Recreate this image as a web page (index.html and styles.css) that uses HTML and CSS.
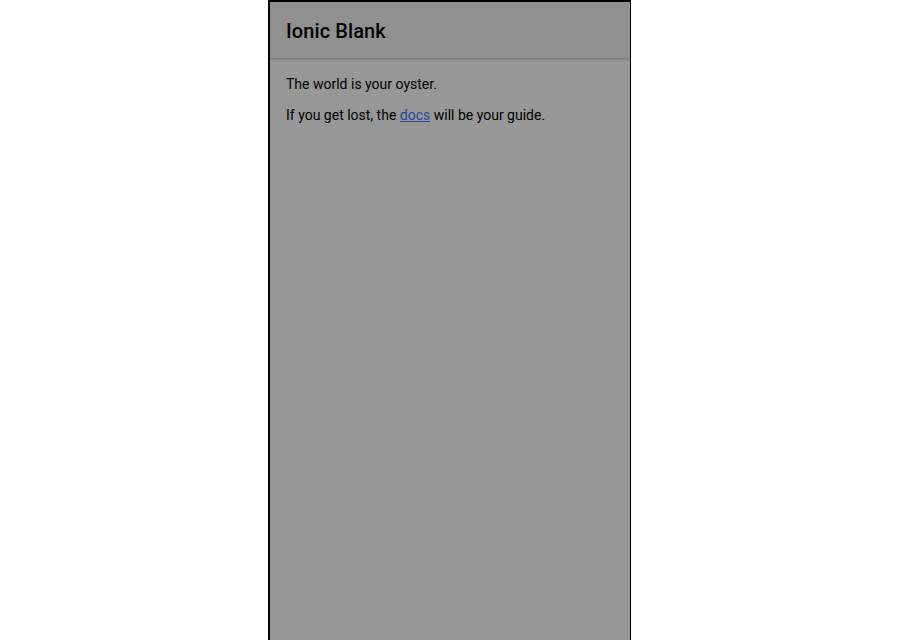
FILE: index.html
```html
<!DOCTYPE html>
<html>
<head>
<meta charset="utf-8">
<link rel="stylesheet" href="styles.css">
</head>
<body>
<div class="device">
  <header class="toolbar">
    <h1 class="title">Ionic Blank</h1>
  </header>
  <main class="content">
    <p>The world is your oyster.</p>
    <p>If you get lost, the <a href="#">docs</a> will be your guide.</p>
  </main>
</div>
</body>
</html>
```
FILE: styles.css
```css
html, body {
  margin: 0;
  padding: 0;
  height: 100%;
  background: #ffffff;
  overflow: hidden;
}
body {
  font-family: Roboto, "Helvetica Neue", Arial, sans-serif;
}
.device {
  margin-left: 268px;
  width: 360px;
  height: 638px;
  border-left: 2px solid #000;
  border-right: 1px solid #000;
  border-top: 2px solid #000;
  background: #979797;
  display: flex;
  flex-direction: column;
}
.toolbar {
  height: 56px;
  background: #909090;
  display: flex;
  align-items: center;
  padding: 2px 16px 0;
  box-sizing: border-box;
  box-shadow: 0 1px 0 #7e7e7e, 0 2px 2px rgba(0,0,0,0.12);
  position: relative;
  z-index: 1;
}
.title {
  margin: 0;
  font-size: 20px;
  font-weight: 500;
  color: #000;
  letter-spacing: 0.1px;
}
.content {
  padding: 16px;
  font-size: 14px;
  color: #000;
}
.content p {
  margin: 0 0 11px;
  line-height: 20px;
}
.content a {
  color: #24479a;
}
```
